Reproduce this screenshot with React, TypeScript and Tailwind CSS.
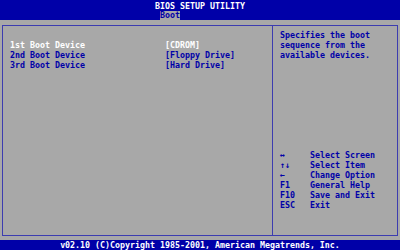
const items = [
  { label: "1st Boot Device", value: "[CDROM]", active: true },
  { label: "2nd Boot Device", value: "[Floppy Drive]", active: false },
  { label: "3rd Boot Device", value: "[Hard Drive]", active: false },
];

const keys = [
  { key: "↔", desc: "Select Screen" },
  { key: "↑↓", desc: "Select Item" },
  { key: "←", desc: "Change Option" },
  { key: "F1", desc: "General Help" },
  { key: "F10", desc: "Save and Exit" },
  { key: "ESC", desc: "Exit" },
];

export default function App() {
  return (
    <div className="flex h-[250px] w-[400px] flex-col overflow-hidden bg-[#a8a8a8] font-['DejaVu_Sans_Mono',monospace] text-[8.3px] font-bold leading-[10px] text-[#0000a8]">
      <header className="flex h-[20px] flex-col bg-[#0000a8]">
        <div className="h-[10px] pt-[1px] text-center text-white">BIOS SETUP UTILITY</div>
        <div className="flex h-[10px] pt-[1px] pl-[160px]">
          <span className="h-[9px] w-[20px] bg-[#a8a8a8] leading-[9px]">Boot</span>
        </div>
      </header>

      <main className="mx-[2px] mt-[5px] mb-[4px] flex flex-1 border border-[#3c3cb0]">
        <section className="flex w-[269px] flex-col pt-[14px] pl-[7px]">
          {items.map((item) => (
            <div
              key={item.label}
              className={item.active ? "flex h-[10px] text-white" : "flex h-[10px]"}
            >
              <span className="w-[155px] whitespace-pre">{item.label}</span>
              <span className="whitespace-pre">{item.value}</span>
            </div>
          ))}
        </section>

        <aside className="flex flex-1 flex-col border-l border-[#3c3cb0] pt-[4px] pl-[7px]">
          <div className="whitespace-pre">Specifies the boot</div>
          <div className="whitespace-pre">sequence from the</div>
          <div className="whitespace-pre">available devices.</div>

          <div className="mt-[90px] flex flex-col">
            {keys.map((k) => (
              <div key={k.key} className="flex h-[10px]">
                <span className="w-[30px] whitespace-pre">{k.key}</span>
                <span className="whitespace-pre">{k.desc}</span>
              </div>
            ))}
          </div>
        </aside>
      </main>

      <footer className="h-[10px] bg-[#0000a8] text-center whitespace-pre text-white">
        v02.10 (C)Copyright 1985-2001, American Megatrends, Inc.
      </footer>
    </div>
  );
}
